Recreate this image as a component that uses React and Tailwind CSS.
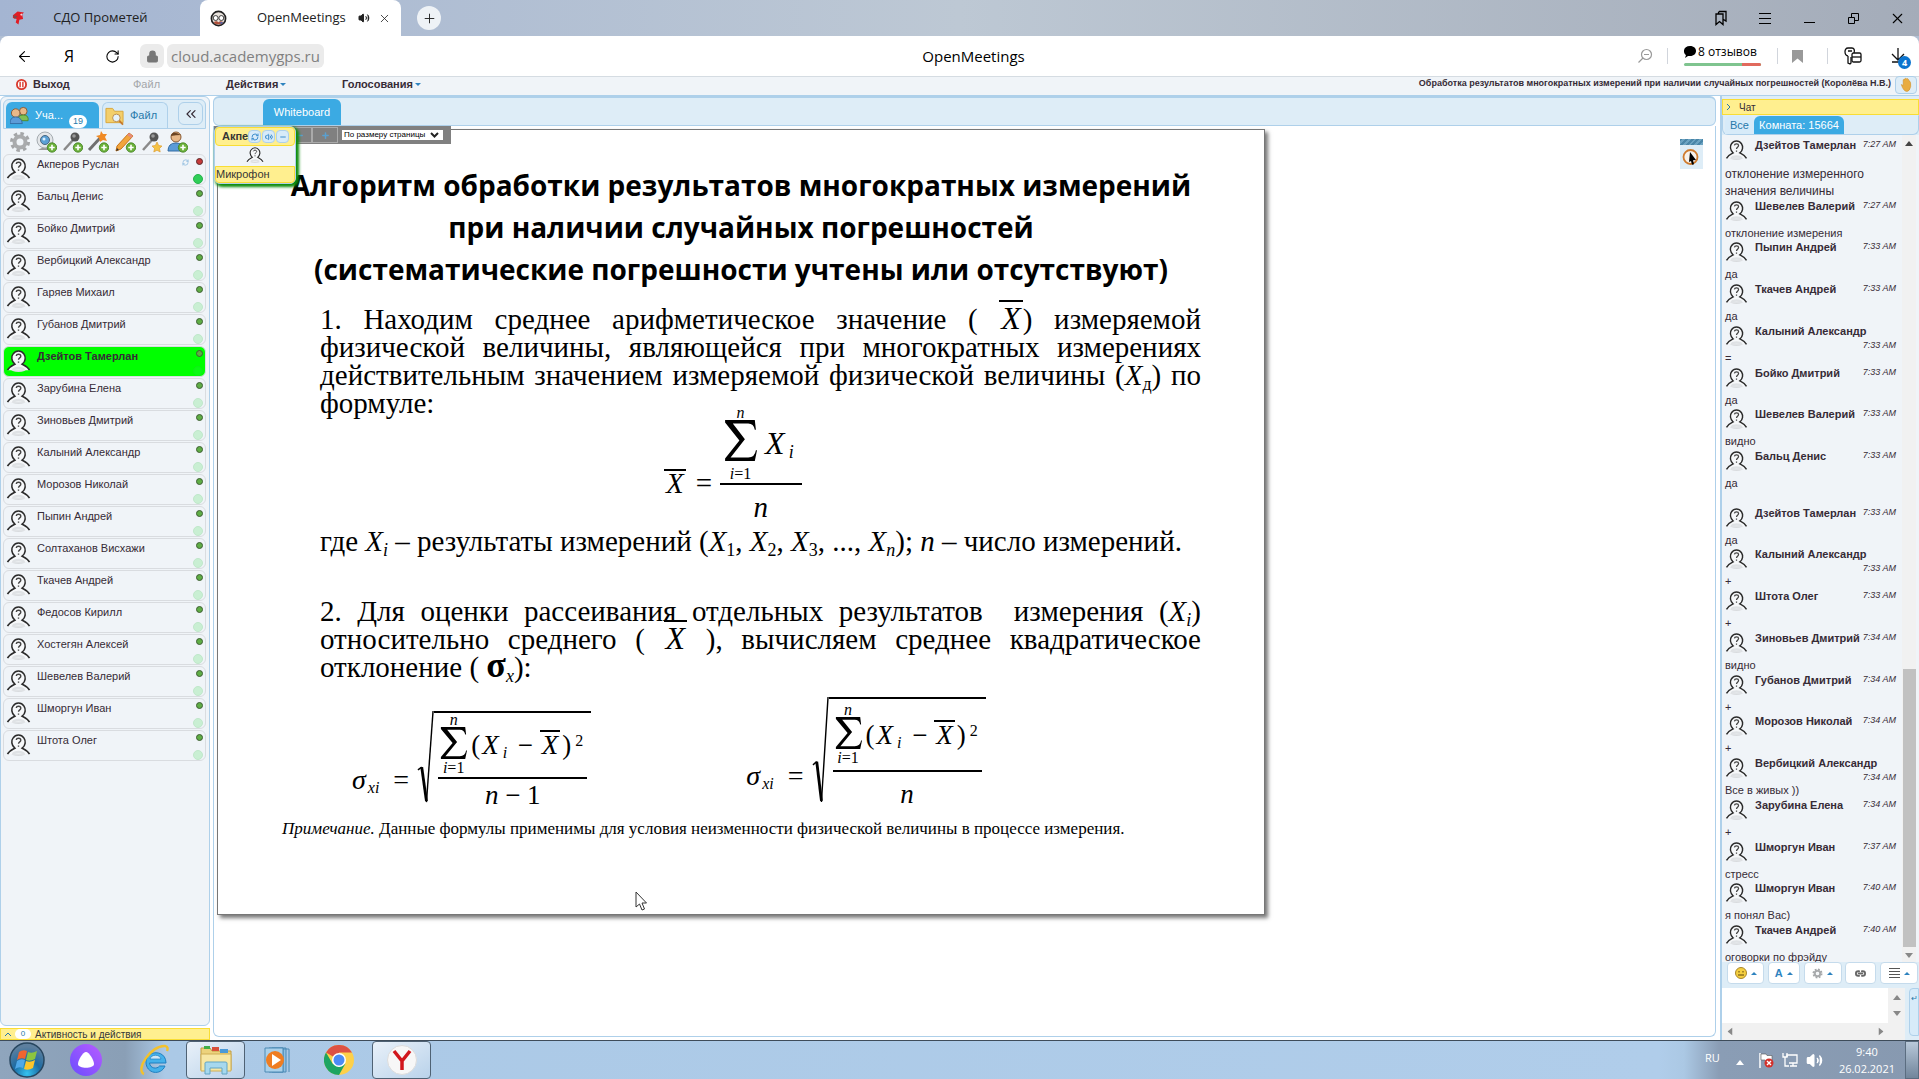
// src/App.jsx
import {
  ArrowLeft,
  ChevronsLeft,
  Link2,
  Lock,
  Minus,
  Plus,
  RefreshCw,
  RotateCw,
  Volume2,
  X,
} from "lucide-react";

const users = [
  "Акперов Руслан",
  "Бальц Денис",
  "Бойко Дмитрий",
  "Вербицкий Александр",
  "Гаряев Михаил",
  "Губанов Дмитрий",
  "Дзейтов Тамерлан",
  "Зарубина Елена",
  "Зиновьев Дмитрий",
  "Калыний Александр",
  "Морозов Николай",
  "Пыпин Андрей",
  "Солтаханов Висхажи",
  "Ткачев Андрей",
  "Федосов Кирилл",
  "Хостегян Алексей",
  "Шевелев Валерий",
  "Шморгун Иван",
  "Штота Олег",
];

const messages = [
  { name: "Дзейтов Тамерлан", time: "7:27 AM", text: "отклонение измеренного значения величины", size: "long" },
  { name: "Шевелев Валерий", time: "7:27 AM", text: "отклонение измерения" },
  { name: "Пыпин Андрей", time: "7:33 AM", text: "да" },
  { name: "Ткачев Андрей", time: "7:33 AM", text: "да" },
  { name: "Калыний Александр", time: "7:33 AM", text: "=", wrap: true },
  { name: "Бойко Дмитрий", time: "7:33 AM", text: "да" },
  { name: "Шевелев Валерий", time: "7:33 AM", text: "видно" },
  { name: "Бальц Денис", time: "7:33 AM", text: "да", size: "tall" },
  { name: "Дзейтов Тамерлан", time: "7:33 AM", text: "да" },
  { name: "Калыний Александр", time: "7:33 AM", text: "+", wrap: true },
  { name: "Штота Олег", time: "7:33 AM", text: "+" },
  { name: "Зиновьев Дмитрий", time: "7:34 AM", text: "видно" },
  { name: "Губанов Дмитрий", time: "7:34 AM", text: "+" },
  { name: "Морозов Николай", time: "7:34 AM", text: "+" },
  { name: "Вербицкий Александр", time: "7:34 AM", text: "Все в живых ))", wrap: true },
  { name: "Зарубина Елена", time: "7:34 AM", text: "+" },
  { name: "Шморгун Иван", time: "7:37 AM", text: "стресс" },
  { name: "Шморгун Иван", time: "7:40 AM", text: "я понял Вас)" },
  { name: "Ткачев Андрей", time: "7:40 AM", text: "оговорки по фрэйду" },
];

function Avatar({ className }) {
  return (
    <svg viewBox="0 0 26 24" className={className} fill="none">
      <ellipse cx="13" cy="20" rx="9" ry="4" fill="#d9dcdf" />
      <path
        d="M1 22c2-4 5-5 8-6.500C5 12 5 7 7 4.500c3-4.500 9-4.500 12 0 2 3 2 8-2 11 3 1.500 6 2.500 8 6.500"
        fill="#f6f8fa"
        stroke="#2b2b2b"
        strokeWidth="1.700"
      />
      <path d="M7 22c2-3 10-3 12 0" stroke="#dfe2e5" strokeWidth="3" />
      <path
        d="M10.500 6.500c.3-2.500 5-2.500 5 .2 0 2-2.500 1.800-2.500 4M13 12.500v1.500"
        stroke="#444"
        strokeWidth="1.500"
      />
    </svg>
  );
}

function Caret({ up }) {
  return (
    <svg viewBox="0 0 6 3" className="h-[3px] w-1.5 shrink-0" fill="#2e83bf">
      <path d={up ? "M0 3L3 0l3 3z" : "M0 0h6L3 3z"} />
    </svg>
  );
}

/* Browser chrome */

const windowButton = "grid h-9 w-11 place-items-center";

function TabStrip() {
  return (
    <div className="flex h-9 shrink-0 items-center bg-gradient-to-r from-[#a4b5d2] via-[#bdc8d4] to-[#a4acb9] font-['Open_Sans',sans-serif] text-[13px] text-[#222]">
      <button className="flex h-full w-[200px] items-center pl-3">
        <svg viewBox="0 0 14 16" className="h-4 w-3.5">
          <path d="M1 5l5-4 7 1-2 2 1 5-4 1-1 5-3-2 1-4-4-1z" fill="#e11d24" />
          <path d="M1 5l5 1-3 3z" fill="#7c4a4a" />
          <path d="M9 4l2-1-1 3z" fill="#fff" />
        </svg>
        <span className="w-full pr-6 text-center">СДО Прометей</span>
      </button>
      <div className="flex h-full w-[201px] items-center rounded-t-lg bg-white">
        <svg viewBox="0 0 18 18" className="ml-2.5 h-[17px] w-[17px] shrink-0">
          <circle cx="9" cy="9" r="7.500" fill="#e8e2dc" stroke="#222" strokeWidth="1.800" />
          <circle cx="6" cy="8.500" r="2.600" fill="#fff" stroke="#333" />
          <circle cx="12" cy="8.500" r="2.600" fill="#fff" stroke="#333" />
          <path d="M4 13c2-2 4-1 5 0 1-1 3-2 5 0l-2 2H6z" fill="#b0503a" />
          <path d="M10 13l4 0-2 2z" fill="#4a68b8" />
        </svg>
        <button className="ml-[30px]">OpenMeetings</button>
        <Volume2 size={12} className="ml-3" fill="#222" />
        <button aria-label="Закрыть вкладку" className="ml-2">
          <X size={13} strokeWidth={1.5} />
        </button>
      </div>
      <button
        aria-label="Новая вкладка"
        className="ml-4 grid h-6 w-6 place-items-center rounded-full bg-[#eef2f6]"
      >
        <Plus size={15} strokeWidth={1.5} />
      </button>
      <div className="ml-auto flex items-center text-black">
        <button aria-label="Закладки" className={windowButton}>
          <svg viewBox="0 0 16 16" className="h-4 w-4" fill="none" stroke="currentColor" strokeWidth="1.300">
            <path d="M3 4h7v10.500L6.500 11.500 3 14.500zM5.500 4V2.500L6.500 1.500H13v9.500l-2.500-1.500" />
          </svg>
        </button>
        <button aria-label="Меню" className={windowButton}>
          <svg viewBox="0 0 12 11" className="h-[11px] w-3" stroke="currentColor">
            <path d="M0 .5h12M0 5.500h12M0 10.500h12" />
          </svg>
        </button>
        <button aria-label="Свернуть" className={`pt-2 ${windowButton}`}>
          <svg viewBox="0 0 11 1" className="h-px w-[11px]" stroke="currentColor">
            <path d="M0 .5h11" />
          </svg>
        </button>
        <button aria-label="Развернуть" className={windowButton}>
          <svg viewBox="0 0 11 11" className="h-[11px] w-[11px]" fill="none" stroke="currentColor">
            <path d="M.5 4.500h6v6h-6zM3.500 4V.5h7v7H7" />
          </svg>
        </button>
        <button aria-label="Закрыть" className={windowButton}>
          <X size={17} strokeWidth={1.5} />
        </button>
      </div>
    </div>
  );
}

function AddressBar() {
  return (
    <div className="bg-[#b1bfd3]">
      <div className="flex h-10 items-center rounded-t-lg bg-white pr-2 pl-4 font-['Open_Sans',sans-serif] text-black">
        <div className="flex flex-1 items-center">
          <button aria-label="Назад">
            <ArrowLeft size={17} strokeWidth={1.5} />
          </button>
          <button className="ml-7 w-4 text-base">Я</button>
          <button aria-label="Обновить" className="ml-7">
            <RotateCw size={15} strokeWidth={1.7} />
          </button>
          <span className="ml-5 grid h-6 w-6 place-items-center rounded-md bg-[#ebebeb]">
            <Lock size={13} fill="#777" stroke="#777" />
          </span>
          <span className="ml-[3px] h-6 rounded-md bg-[#ebebeb] px-1 text-[15px] leading-6 text-[#808080]">
            cloud.academygps.ru
          </span>
        </div>
        <span className="pl-5 text-[15px]">OpenMeetings</span>
        <div className="flex flex-1 items-center justify-end">
          <svg viewBox="0 0 16 16" className="h-4 w-4" fill="none" stroke="#999" strokeWidth="1.200">
            <circle cx="9.500" cy="6.500" r="5" />
            <path d="M7 6.500h5M6 10l-4.500 4.500" />
          </svg>
          <span className="ml-3.5 h-4 w-px bg-gray-300" />
          <a href="#reviews" className="mb-px ml-4 flex w-[77px] flex-col">
            <span className="flex items-center text-[12px] leading-[14px] whitespace-nowrap">
              <svg viewBox="0 0 12 12" className="mr-0.5 h-3 w-3 shrink-0">
                <path d="M6 0c8 0 8 10 0 10H4l-3 2 1-3C-2 6 0 0 6 0z" />
              </svg>
              8 отзывов
            </span>
            <span className="mt-1 flex h-[3px] overflow-hidden rounded bg-[#7fc48f]">
              <span className="ml-auto w-[19px] bg-[#e16a5d]" />
            </span>
          </a>
          <span className="ml-4 h-4 w-px bg-gray-300" />
          <svg viewBox="0 0 11 13" className="ml-3.5 h-[13px] w-[11px]" fill="#999">
            <path d="M0 0h11v13L5.500 8.500 0 13z" />
          </svg>
          <span className="ml-6 h-4 w-px bg-gray-300" />
          <svg viewBox="0 0 18 18" className="ml-4 h-[18px] w-[18px]" fill="none" stroke="#111" strokeWidth="1.300">
            <path d="M4 9C0 8 0 1 4 1h4c2 0 3 2 2 5M4 9v7l2 1 1-1v-6M4 4h4" />
            <rect x="8" y="6" width="9" height="9" rx="1.500" />
            <path d="M8 10h9" />
          </svg>
          <button aria-label="Загрузки" className="relative ml-[29px] h-5 w-5">
            <svg viewBox="0 0 20 20" className="h-5 w-5" fill="none" stroke="#111" strokeWidth="1.300">
              <path d="M7 2v11M1 8l6 6 6-6M1 16h7" />
            </svg>
            <span className="absolute top-2.5 left-[7px] grid h-[13px] w-[13px] place-items-center rounded-full bg-[#0b74cf] text-[9px] font-bold text-white">
              4
            </span>
          </button>
        </div>
      </div>
    </div>
  );
}

/* OpenMeetings room */

function RoomMenu() {
  return (
    <nav className="flex h-5 shrink-0 items-center border-y border-[#aed0ea] border-t-[#d5dce2] bg-[#f0f4f8] pb-[3px] text-[11px] font-bold text-[#362b36]">
      <button className="flex w-[117px] items-center gap-1.5 pl-4">
        <svg viewBox="0 0 12 12" className="h-[11px] w-[11px]">
          <circle cx="6" cy="6" r="5" fill="#fff" stroke="#d9382c" strokeWidth="2" />
          <path d="M4.500 3v6M7.500 3v6" stroke="#d9382c" strokeWidth="1.500" />
        </svg>
        Выход
      </button>
      <button disabled className="w-[93px] pl-4 text-left font-normal text-[#a3a6a9]">
        Файл
      </button>
      <button className="flex w-[116px] items-center gap-0.5 pl-4">
        Действия <Caret />
      </button>
      <button className="flex items-center gap-0.5 pl-4">
        Голосования <Caret />
      </button>
      <span className="mr-1 mb-0.5 ml-auto text-[9px]">
        Обработка результатов многократных измерений при наличии случайных погрешностей (Королёва Н.В.)
      </span>
      <button
        aria-label="Поднять руку"
        className="mr-0.5 grid h-[18px] w-[22px] place-items-center rounded border border-[#aed0ea] bg-[#deedf7]"
      >
        <svg viewBox="0 0 12 16" className="h-[15px] w-3">
          <path
            d="M1 8l2 1V3q1-1 1.500 0V2Q6 .5 6.500 2q1-1 2 .5l1 1.500q2 1 1.500 6-1 5-4 5.500Q3 15 1 8z"
            fill="#e9ac3f"
            stroke="#cf8f2b"
            strokeWidth=".6"
          />
        </svg>
      </button>
    </nav>
  );
}

function PlusBadge() {
  return (
    <g>
      <circle cx="17" cy="16.500" r="4.700" fill="#6cb23a" stroke="#3f7d1e" strokeWidth=".8" />
      <path d="M17 13.800v5.400M14.300 16.500h5.400" stroke="#fff" strokeWidth="1.600" />
    </g>
  );
}

function Mic() {
  return (
    <g>
      <path d="M12 9L3 19" stroke="#8a8a8a" strokeWidth="2.500" />
      <circle cx="14" cy="6" r="4.500" fill="#555" />
      <circle cx="13" cy="5" r="1.800" fill="#999" />
    </g>
  );
}

const tools = [
  {
    label: "Настройки",
    icon: (
      <g>
        <circle cx="11" cy="11" r="8" fill="none" stroke="#a4a6a8" strokeWidth="4" strokeDasharray="3.300 3" />
        <circle cx="11" cy="11" r="5.500" fill="none" stroke="#a9abad" strokeWidth="4" />
        <circle cx="11" cy="11" r="2" fill="#f0f4f8" />
      </g>
    ),
  },
  {
    label: "Камера",
    icon: (
      <g>
        <path d="M3 19q6-5 13 0z" fill="#999" />
        <circle cx="10" cy="9" r="8" fill="#e3e6e9" stroke="#a5abb0" />
        <circle cx="10" cy="9" r="4.500" fill="#5aa0d6" stroke="#4a6780" />
        <circle cx="9" cy="8" r="1.500" fill="#d9efff" />
        <PlusBadge />
      </g>
    ),
  },
  { label: "Микрофон", icon: <g><Mic /><PlusBadge /></g> },
  {
    label: "Эффекты",
    icon: (
      <g>
        <path d="M2 19L14 6" stroke="#707070" strokeWidth="3" />
        <path d="M14 0l2 3 4 0-2 3 2 4-4-1-3 2-1-4-3-2 4-1z" fill="#f08a24" />
        <PlusBadge />
      </g>
    ),
  },
  {
    label: "Рисование",
    icon: (
      <g>
        <path d="M2 20l1-5L15 2l4 3L7 18z" fill="#f2a53c" stroke="#c97518" />
        <path d="M15 2l4 3-2 2-4-3z" fill="#e58b7c" />
        <path d="M2 20l1-3 2 2z" fill="#333" />
        <PlusBadge />
      </g>
    ),
  },
  {
    label: "Эксклюзивный звук",
    icon: (
      <g>
        <Mic />
        <path d="M17 11l1.700 3.500 3.300.5-2.500 2.500.7 3.500-3.200-1.700-3.200 1.700.7-3.500L12 15l3.300-.5z" fill="#f6c344" stroke="#d8962a" strokeWidth=".6" />
      </g>
    ),
  },
  {
    label: "Модератор",
    icon: (
      <g>
        <circle cx="10" cy="6" r="5" fill="#e8b888" stroke="#8a5a33" />
        <path d="M5 5q1-6 10-1-5 0-10 1z" fill="#6b4423" />
        <path d="M2 20q0-8 8-8t8 8z" fill="#5b9bd8" stroke="#356da3" />
        <PlusBadge />
      </g>
    ),
  },
];

function UserRow({ name, first, speaking }) {
  return (
    <li
      className={
        speaking
          ? "flex h-[31px] rounded-md border border-[#d9dce0] bg-[#00ff00] pl-0.5 font-bold"
          : "flex h-[31px] rounded-md border border-[#d9dce0] bg-[#f0f4f8] pl-0.5"
      }
    >
      <Avatar className="mt-[3px] h-[22px] w-[25px] shrink-0" />
      <span className="ml-1.5 flex-1 pt-[3px] leading-[13px] whitespace-nowrap">{name}</span>
      {first && <RefreshCw size={7} className="mt-1 mr-1 text-[#6fa8d8]" />}
      <span className="flex w-3 flex-col items-end justify-between pt-[3px] pr-0.5">
        <span
          className={
            first
              ? "h-[7px] w-[7px] rounded-full border border-[#5c2a2a] bg-[#c63a3a]"
              : "h-[7px] w-[7px] rounded-full border border-[#3f5f34] bg-[#5fae45]"
          }
        />
        <span
          className={
            first
              ? "h-2.5 w-2.5 rounded-full border border-[#26b34c] bg-[#2fce58]"
              : speaking
                ? "h-2.5 w-2.5 rounded-full border border-[#10ee18] bg-[#0afb12]"
                : "h-2.5 w-2.5 rounded-full border border-[#c0e8cb] bg-[#c9efd3]"
          }
        />
      </span>
    </li>
  );
}

function UsersPanel() {
  return (
    <aside className="mr-[3px] flex w-[210px] shrink-0 flex-col">
      <div className="flex flex-1 flex-col rounded-md border border-[#aed0ea] bg-[#f0f4f8] p-0.5 pr-[3px] text-[11px] text-[#362b36]">
        <div className="flex h-[30px] items-end rounded-t-md border border-[#aed0ea] bg-[#deedf7] pl-0.5">
          <button className="flex h-[26px] w-[93px] items-center rounded-t-md bg-[#3baae3] pl-1 text-white">
            <svg viewBox="0 0 20 20" className="h-5 w-[19px]">
              <circle cx="14" cy="6" r="4" fill="#e8b888" stroke="#8a5a33" />
              <path d="M8 16q0-6 6-6t5 6z" fill="#7fbf55" stroke="#4d8a2c" />
              <circle cx="6" cy="8" r="4.500" fill="#e8b888" stroke="#8a5a33" />
              <path d="M0 19q0-7 6-7t7 7z" fill="#5b9bd8" stroke="#356da3" />
            </svg>
            <span className="ml-1.5">Уча...</span>
            <span className="mt-3 ml-1.5 w-[18px] rounded-full bg-white text-center text-[9px] leading-[13px] text-[#2779aa]">
              19
            </span>
          </button>
          <button className="ml-[3px] flex h-[26px] w-[66px] items-center gap-1.5 rounded-t-md border border-b-0 border-[#aed0ea] bg-[#d7ebf9] pl-0.5 text-[#2779aa]">
            <svg viewBox="0 0 20 20" className="h-5 w-[19px]">
              <path d="M1 2h7l2 3h9v12H1z" fill="#f3cf6b" stroke="#d9a63a" />
              <circle cx="12" cy="12" r="4" fill="#e6f2fb" stroke="#b98b4a" />
              <path d="M15 15l4 4" stroke="#c77a2c" strokeWidth="2" />
            </svg>
            Файл
          </button>
          <button
            aria-label="Свернуть панель"
            className="mb-[3px] ml-2.5 grid h-[23px] w-[25px] place-items-center rounded-md border border-[#aed0ea] bg-[#deedf7]"
          >
            <ChevronsLeft size={16} strokeWidth={1.8} />
          </button>
        </div>
        <div className="flex h-[25px] items-center justify-between pr-[18px] pl-1.5">
          {tools.map((tool) => (
            <button key={tool.label} aria-label={tool.label}>
              <svg viewBox="0 0 22 22" className="h-[22px] w-[22px]">
                {tool.icon}
              </svg>
            </button>
          ))}
        </div>
        <ul className="flex flex-col gap-px">
          {users.map((name, i) => (
            <UserRow key={name} name={name} first={i === 0} speaking={i === 6} />
          ))}
        </ul>
      </div>
      <button className="mt-0.5 flex h-3 items-center border border-[#f9dd34] bg-[#ffef8f] pl-1 text-[10px] text-[#363636]">
        <svg viewBox="0 0 6 4" className="h-1 w-1.5" fill="none" stroke="#2779aa">
          <path d="M0 4l3-3 3 3" />
        </svg>
        <span className="mx-1 w-4 rounded-full bg-white text-center text-[8px] leading-[10px] text-[#2779aa]">0</span>
        Активность и действия
      </button>
    </aside>
  );
}

/* Slide */

function XBar({ className = "px-0.5 text-[32px] leading-[0]" }) {
  return (
    <i className={`relative ${className}`}>
      X
      <span className="absolute top-0 left-0 h-0.5 w-full bg-black" />
    </i>
  );
}

function Sum({ size = "h-8 w-[27px]" }) {
  return (
    <span className="flex flex-col items-center leading-none">
      <i className="text-base leading-[14px]">n</i>
      <svg viewBox="0 0 30 34" preserveAspectRatio="none" className={size}>
        <path d="M1 0h27l1 8h-1q-1-5-6-5H8l11 13L6 31h16q6 0 7-6h1l-2 9H1v-2l13-15L1 2z" />
      </svg>
      <span className="text-base leading-[18px]">
        <i>i</i>=1
      </span>
    </span>
  );
}

function Sigma({ root, box, side, under, children }) {
  return (
    <div className="flex items-end">
      <span className={`text-[28px] leading-8 italic ${side}`}>
        σ<sub className="pl-0.5 text-[16px]">xi</sub>
      </span>
      <span className={`pr-2 pl-3.5 text-[28px] leading-8 ${side}`}>=</span>
      <svg viewBox="0 0 18 100" preserveAspectRatio="none" className={root} fill="none" stroke="#000">
        <path d="M1 64l4-3" strokeWidth="1.500" />
        <path d="M5 61l5 37" strokeWidth="3" />
        <path d="M10 99l7-99" strokeWidth="1.500" />
      </svg>
      <div className={`flex flex-col items-center border-t-2 border-black px-1 ${box}`}>
        <div className="flex flex-1 items-center border-b-2 border-black pr-1 pl-0.5">
          <Sum />
          <span className="pl-1 text-[27px] leading-8 whitespace-nowrap">
            (<i className="pl-0.5">X</i>
            <sub className="px-1 text-[16px] italic">i</sub> − <XBar className="px-0.5" />
            <span className="px-0.5">)</span>
            <sup className="pl-0.5 text-[16px]">2</sup>
          </span>
        </div>
        <span className={`text-[27px] ${under}`}>{children}</span>
      </div>
    </div>
  );
}

function Slide() {
  return (
    <article className="ml-[3px] min-h-[786px] w-full max-w-[1048px] border border-[#777] bg-white pt-[34px] font-['Liberation_Serif',serif] text-black shadow-[3px_3px_4px_#777]">
      <h1 className="text-center font-['Open_Sans',sans-serif] text-[28px] leading-[42px] font-bold">
        Алгоритм обработки результатов многократных измерений
        <br />
        при наличии случайных погрешностей
        <br />
        (систематические погрешности учтены или отсутствуют)
      </h1>
      <div className="mt-[15px] mr-[63px] ml-[102px] text-[29px] leading-7">
        <p className="[text-align-last:justify]">
          1. Находим среднее арифметическое значение ( <XBar />) измеряемой
        </p>
        <p className="[text-align-last:justify]">физической величины, являющейся при многократных измерениях</p>
        <p className="[text-align-last:justify]">
          действительным значением измеряемой физической величины (<i>X</i>
          <sub className="text-[18px]">д</sub>) по
        </p>
        <p>формуле:</p>
        <div className="-mt-3 flex h-[122px] items-end pl-[344px]">
          <span className="flex gap-2.5 pb-[30px]">
            <XBar className="px-0.5" /> =
          </span>
          <span className="ml-2 flex flex-col items-center">
            <span className="flex items-center border-b-2 border-black px-1">
              <Sum size="mb-1 h-[41px] w-[33px]" />
              <i className="pr-1 pb-1 pl-2 text-[32px] whitespace-nowrap">
                X<sub className="pl-1 text-[18px]">i</sub>
              </i>
            </span>
            <i className="h-[42px] pt-2">n</i>
          </span>
        </div>
        <p>
          где <i>X<sub className="text-[18px]">i</sub></i> – результаты измерений (<i>X</i>
          <sub className="text-[18px]">1</sub>, <i>X</i>
          <sub className="text-[18px]">2</sub>, <i>X</i>
          <sub className="text-[18px]">3</sub>, ..., <i>X<sub className="text-[18px]">n</sub></i>); <i>n</i> – число
          измерений.
        </p>
        <p className="mt-[42px] [text-align-last:justify]">
          2. Для оценки рассеивания отдельных результатов &nbsp;измерения (<i>X<sub className="text-[18px]">i</sub></i>)
        </p>
        <p className="[text-align-last:justify]">
          относительно среднего ( <XBar /> ), вычисляем среднее квадратическое
        </p>
        <p>
          отклонение ( <span className="text-[36px] leading-[0] font-bold">σ</span>
          <sub className="text-[18px] italic">x</sub>):
        </p>
      </div>
      <div className="mt-4 flex items-end gap-[155px] pl-[134px]">
        <Sigma root="h-[92px] w-[17px]" box="h-[92px]" side="pb-[7px]" under="h-[26px] leading-8">
          <i>n</i> − 1
        </Sigma>
        <Sigma root="h-[106px] w-[17px]" box="h-[106px]" side="pb-[11px]" under="h-[31px] leading-[44px]">
          <i>n</i>
        </Sigma>
      </div>
      <p className="mt-3.5 pl-16 text-[17px] leading-6">
        <i>Примечание.</i> Данные формулы применимы для условия неизменности физической величины в процессе
        измерения.
      </p>
    </article>
  );
}

function MicPopup() {
  return (
    <div className="absolute top-0 left-0 flex w-[82px] flex-col rounded-md border border-[#aed0ea] bg-[#f0f4f8] text-[11px] text-[#363636] shadow-[2px_2px_3px_1px_#0a8a0a]">
      <div className="flex h-[19px] items-center rounded border border-[#f9dd34] bg-[#ffef8f] pl-1.5 font-bold">
        <span className="w-[26px] overflow-hidden">Акпе</span>
        <div className="flex gap-px text-[#3f8fce]">
          {[RefreshCw, Volume2, Minus].map((Icon, i) => (
            <button
              key={i}
              aria-label={["Обновить", "Звук", "Свернуть"][i]}
              className="grid h-[13px] w-[13px] place-items-center rounded border border-[#aed0ea] bg-[#d7ebf9]"
            >
              <Icon size={8} strokeWidth={3} />
            </button>
          ))}
        </div>
      </div>
      <Avatar className="mx-auto mt-px h-4 w-[18px]" />
      <div className="mt-[3px] h-[17px] rounded-b border border-[#f9dd34] bg-[#ffef8f] leading-[14px]">Микрофон</div>
    </div>
  );
}

function Whiteboard() {
  return (
    <main className="relative mr-1 flex min-w-0 flex-1 flex-col">
      <div className="flex h-[30px] shrink-0 items-end rounded-md border border-t-2 border-[#aed0ea] bg-[#deedf7] pl-[49px]">
        <button className="h-[26px] w-[78px] rounded-t-md bg-[#3baae3] pt-px text-[11px] text-white">Whiteboard</button>
      </div>
      <div className="relative mb-[3px] flex-1 rounded-b-md border border-t-0 border-[#aed0ea] bg-white pt-[3px]">
        <Slide />
        <div className="absolute top-0 left-0 flex h-[18px] w-[237px] items-center justify-end gap-1 bg-[#808080] pr-2">
          <button aria-label="Уменьшить" className="grid h-4 w-[26px] place-items-center border border-[#aaa] text-[#5aa0d0]">
            <Minus size={9} strokeWidth={4} />
          </button>
          <button
            aria-label="Увеличить"
            className="-ml-1 grid h-4 w-[26px] place-items-center border border-[#aaa] text-[#5aa0d0]"
          >
            <Plus size={9} strokeWidth={4} />
          </button>
          <span className="flex h-2.5 w-[101px] items-center bg-white pr-1">
            <select
              aria-label="Масштаб"
              className="h-2.5 min-w-0 flex-1 appearance-none pl-0.5 text-[8px] leading-[10px] text-black"
            >
              <option>По размеру страницы</option>
            </select>
            <svg viewBox="0 0 9 6" className="h-1.5 w-[9px]" fill="none" stroke="#222" strokeWidth="2">
              <path d="M1 1l3.500 3.500L8 1" />
            </svg>
          </span>
        </div>
        <MicPopup />
        <button aria-label="Указатель" className="absolute top-[13px] right-3 w-[23px] bg-[#deedf7]">
          <span className="block h-1.5 bg-[repeating-linear-gradient(135deg,#4a86a8_0_2px,#6ba3c2_2px_4px)]" />
          <svg viewBox="0 0 23 24" className="h-6 w-[23px]">
            <circle cx="10.500" cy="12" r="7" fill="#f7f2ec" stroke="#cf7b2e" strokeWidth="1.800" />
            <path d="M10 7l6 8-3 .3 1 4-2 .4-1-3.700-2 1z" />
          </svg>
        </button>
        <svg viewBox="0 0 12 20" className="absolute top-[765px] left-[421px] h-5 w-3" fill="#fff" stroke="#333">
          <path d="M1 1v15l3.500-3 2.500 6 2.500-1L7 12h4.500z" />
        </svg>
      </div>
    </main>
  );
}

function Message({ name, time, text, size, wrap }) {
  const height = size === "long" ? "h-[60px]" : size === "tall" ? "h-14" : "h-[41px] last:h-[39px]";
  return (
    <li className={`shrink-0 ${height}`}>
      <div className="flex h-7 items-start">
        <Avatar className="mt-0.5 h-5 w-[23px] shrink-0" />
        <div className={wrap ? "ml-[7px] flex-1 pr-1.5" : "ml-[7px] flex flex-1 justify-between pr-1.5"}>
          <b className="block leading-[15px] whitespace-nowrap">{name}</b>
          <i className="block text-right text-[9px] leading-3 whitespace-nowrap">{time}</i>
        </div>
      </div>
      <p className={size === "long" ? "w-40 text-xs leading-[17px]" : "leading-[13px]"}>{text}</p>
    </li>
  );
}

function ScrollArrow({ className = "", fill = "#888" }) {
  return (
    <svg viewBox="0 0 8 5" className={`h-[5px] w-2 ${className}`} fill={fill}>
      <path d="M0 5l4-5 4 5z" />
    </svg>
  );
}

const chatButton = "flex h-[22px] items-center justify-center gap-1 rounded border border-[#c5dbec] bg-white";

function Chat() {
  return (
    <section className="flex w-[199px] shrink-0 flex-col border-l-2 border-[#aed0ea] bg-[#deedf7] pt-[3px] text-[11px] text-[#362b36]">
      <h2 className="flex h-4 shrink-0 items-center gap-2 border border-[#f9dd34] bg-[#ffef8f] pl-1 text-[10px]">
        <svg viewBox="0 0 4 6" className="h-1.5 w-1" fill="none" stroke="#2779aa">
          <path d="M0 0l3 3-3 3" />
        </svg>
        Чат
      </h2>
      <div className="flex h-5 shrink-0 items-end rounded-b-md border border-[#aed0ea] border-t-[#deedf7] pl-0.5">
        <button className="h-[18px] w-[29px] rounded-t-md bg-[#d7ebf9] text-[#2779aa]">Все</button>
        <button className="h-[18px] w-[90px] rounded-t-md bg-[#3baae3] text-white">Комната: 15664</button>
      </div>
      <div className="flex min-h-0 flex-1 bg-[#f0f4f8] pr-[3px]">
        <ul className="flex min-w-0 flex-1 flex-col justify-between overflow-hidden pt-[3px] pl-[3px]">
          {messages.map((message, i) => (
            <Message key={i} {...message} />
          ))}
        </ul>
        <div className="flex w-3.5 flex-col items-center bg-[#f1f1f1] pt-1.5 pb-1">
          <ScrollArrow fill="#444" />
          <span className="mt-auto mb-1.5 h-[278px] w-[13px] bg-[#c1c1c1]" />
          <ScrollArrow className="rotate-180" />
        </div>
      </div>
      <div className="flex h-[26px] shrink-0 items-start justify-between pr-px pl-[5px]">
        <button aria-label="Смайлы" className={`w-[37px] ${chatButton}`}>
          <svg viewBox="0 0 12 12" className="h-3 w-3">
            <circle cx="6" cy="6" r="5.500" fill="#f5cf3f" stroke="#a8862b" />
            <path d="M4 4v1.500M8 4v1.500M3 8h6" stroke="#5a430d" />
          </svg>
          <Caret up />
        </button>
        <button aria-label="Шрифт" className={`w-8 font-bold text-[#2e83bf] ${chatButton}`}>
          A <Caret up />
        </button>
        <button aria-label="Настройки чата" className={`w-[38px] ${chatButton}`}>
          <svg viewBox="0 0 22 22" className="h-[11px] w-[11px]">
            {tools[0].icon}
          </svg>
          <Caret up />
        </button>
        <button aria-label="Ссылка" className={`w-[31px] ${chatButton}`}>
          <Link2 size={11} strokeWidth={4} className="text-[#666]" />
        </button>
        <button aria-label="Выравнивание" className={`w-[38px] ${chatButton}`}>
          <svg viewBox="0 0 11 10" className="h-2.5 w-[11px]" stroke="#555">
            <path d="M0 .5h11M0 3.500h11M0 6.500h11M0 9.500h11" />
          </svg>
          <Caret up />
        </button>
      </div>
      <div className="flex h-[52px] shrink-0 gap-1">
        <div className="flex flex-1 flex-col bg-[#f1f1f1]">
          <div className="flex h-[35px]">
            <textarea aria-label="Сообщение" className="min-w-0 flex-1 resize-none bg-white" />
            <span className="flex w-[17px] flex-col items-center justify-between py-[7px]">
              <ScrollArrow />
              <ScrollArrow className="rotate-180" />
            </span>
          </div>
          <div className="flex flex-1 items-center justify-between pr-5 pl-1">
            <ScrollArrow className="-rotate-90" />
            <ScrollArrow className="rotate-90" />
          </div>
        </div>
        <button
          aria-label="Отправить"
          className="mb-1 flex w-2.5 justify-center rounded-l border border-[#aed0ea] bg-[#d7ebf9] pt-1 text-[8px] text-[#2779aa]"
        >
          ↵
        </button>
      </div>
    </section>
  );
}

/* Windows taskbar */

const taskButton =
  "grid h-full w-[59px] place-items-center rounded-sm border border-[#4f6274] bg-gradient-to-br from-[#e9f1f9] to-[#b9d2ea]";

function Taskbar() {
  return (
    <footer className="flex h-[39px] shrink-0 items-center border-t border-[#3e4c5a] bg-[linear-gradient(90deg,#8fa5bd_0,#8a9fb6_125px,#abc9e6_165px,#b0cdea_calc(100%-260px),#abc8e4_calc(100%-235px),#8a9db5_calc(100%-200px),#8799b0_100%)] font-['Open_Sans',sans-serif] text-xs text-white">
      <button aria-label="Пуск" className="ml-[9px]">
        <svg viewBox="0 0 36 36" className="h-9 w-9">
          <defs>
            <radialGradient id="orb" cx="50%" cy="90%" r="80%">
              <stop offset="0" stopColor="#35c3f0" />
              <stop offset=".5" stopColor="#1c6ba3" />
              <stop offset="1" stopColor="#5d7f9e" />
            </radialGradient>
          </defs>
          <circle cx="18" cy="18" r="17" fill="url(#orb)" stroke="#27465f" strokeWidth="1.500" />
          <path d="M10 10q4-3 8-1l-2 8q-4-2-8 1z" fill="#f0652f" />
          <path d="M19 10q4 2 9-1l-2 8q-5 3-9 1z" fill="#8cc540" />
          <path d="M8 19q4-3 8-1l-2 8q-4-2-8 1z" fill="#4fa8e8" />
          <path d="M17 19q4 2 9-1l-2 8q-5 3-9 1z" fill="#fcc52b" />
        </svg>
      </button>
      <button aria-label="Алиса" className="ml-[25px]">
        <svg viewBox="0 0 32 32" className="h-8 w-8">
          <defs>
            <linearGradient id="alice" x1="1" y1="0" x2="0" y2="1">
              <stop offset="0" stopColor="#b85cff" />
              <stop offset="1" stopColor="#6a4dff" />
            </linearGradient>
          </defs>
          <circle cx="16" cy="16" r="16" fill="url(#alice)" />
          <path d="M16 8c3 0 8 8 8 12 0 5-16 5-16 0 0-4 5-12 8-12z" fill="#fff" />
        </svg>
      </button>
      <button aria-label="Internet Explorer" className="ml-9">
        <svg viewBox="0 0 32 32" className="h-8 w-8" fill="none">
          <path
            d="M28 19H11.500c.5 5.500 7.500 6.500 10 3H27c-4 10-19 8-19-4 0-12 20-13 20 1z"
            fill="#45b1ea"
            stroke="#1f7fc0"
          />
          <path d="M12 15h11c-1-5-10-5-11 0z" fill="#cfe6f5" stroke="#1f7fc0" strokeWidth=".7" />
          <path d="M6 30C-3 26 13 1 27 2c3 .5 3 3 2 5" stroke="#f2c12e" strokeWidth="2.500" />
        </svg>
      </button>
      <button aria-label="Проводник" className={`ml-4 ${taskButton}`}>
        <svg viewBox="0 0 32 30" className="h-[30px] w-8">
          <path d="M1 3h9l2 3h19v19H1z" fill="#ecd27c" stroke="#c09c40" />
          <path d="M4 1h6v3H4z" fill="#3fae49" />
          <path d="M12 2h7v4h-7z" fill="#d8503b" />
          <path d="M20 4h8v4h-8z" fill="#4a9ad8" />
          <path d="M1 9h30v17H1z" fill="#f7e7a4" stroke="#cfae55" />
          <path d="M5 29V18q0-1 2-1h18q2 0 2 1v11h-5v-6H10v6z" fill="#a6d8ee" stroke="#62a5c4" />
        </svg>
      </button>
      <button aria-label="Проигрыватель" className="ml-[19px]">
        <svg viewBox="0 0 28 26" className="h-[26px] w-7">
          <path d="M8 1h14v24H8z" fill="#8fc0e2" stroke="#4d8ab5" />
          <path d="M5 1h14v24H5zM11 2h14v23" fill="none" stroke="#4d8ab5" />
          <path d="M1 1h18v24H1z" fill="#a9d0ea" stroke="#4d8ab5" />
          <circle cx="11" cy="13" r="9" fill="#ef7d22" />
          <path d="M8 7l9 6-9 6z" fill="#fff" />
        </svg>
      </button>
      <button aria-label="Chrome" className="ml-8">
        <svg viewBox="0 0 30 30" className="h-[30px] w-[30px]">
          <circle cx="15" cy="15" r="15" fill="#fdd04a" />
          <path d="M15 15L2 7.500A15 15 0 0 1 28 7.500H15z" fill="#dd5144" />
          <path d="M2 7.500A15 15 0 0 0 15 30l6.500-11.500L15 22l-6.500-3.500z" fill="#1da462" />
          <circle cx="15" cy="15" r="7" fill="#fff" />
          <circle cx="15" cy="15" r="5.500" fill="#4c8bf5" />
        </svg>
      </button>
      <button aria-label="Яндекс Браузер" className={`ml-[18px] ${taskButton}`}>
        <svg viewBox="0 0 30 30" className="h-[30px] w-[30px]" fill="none">
          <circle cx="15" cy="15" r="14.500" fill="#f7f7f7" stroke="#dcdcdc" />
          <path d="M7 6l8 10 8-10M15 15v10" stroke="#d1161c" strokeWidth="3.500" />
        </svg>
      </button>
      <div className="ml-auto flex h-full items-center">
        <span className="mb-1 text-[11px]">RU</span>
        <svg viewBox="0 0 8 5" className="mt-1 ml-4 h-[5px] w-2" fill="#fff">
          <path d="M0 5l4-5 4 5z" />
        </svg>
        <svg viewBox="0 0 16 16" className="ml-3.5 h-4 w-4" fill="none">
          <path d="M2 16V1" stroke="#fff" strokeWidth="1.500" />
          <path d="M3 2h5l1 1.500h5v6H8L7 8H3z" fill="#fff" stroke="#555" strokeWidth=".6" />
          <circle cx="11" cy="11" r="4.500" fill="#d3302a" />
          <path d="M9 9l4 4M13 9l-4 4" stroke="#fff" strokeWidth="1.400" />
        </svg>
        <svg viewBox="0 0 16 16" className="ml-2 h-4 w-4" fill="none" stroke="#fff" strokeWidth="1.300">
          <path d="M5 5V3h10v8H7M8 14h7M11 11v3" />
          <path d="M1 1v4h4V1M3 5v9h4" />
        </svg>
        <Volume2 size={17} fill="#fff" className="ml-2" />
        <time className="ml-4 text-center text-[11px] leading-[17px]">
          9:40
          <br />
          26.02.2021
        </time>
        <span className="ml-2.5 h-full w-3.5 border border-[#5b6d80] bg-gradient-to-b from-[#b9c9da] to-[#71859b]" />
      </div>
    </footer>
  );
}

export default function App() {
  return (
    <div className="flex h-screen flex-col overflow-hidden bg-white font-['Liberation_Sans',sans-serif]">
      <TabStrip />
      <AddressBar />
      <RoomMenu />
      <div className="flex min-h-0 flex-1">
        <UsersPanel />
        <Whiteboard />
        <Chat />
      </div>
      <Taskbar />
    </div>
  );
}
